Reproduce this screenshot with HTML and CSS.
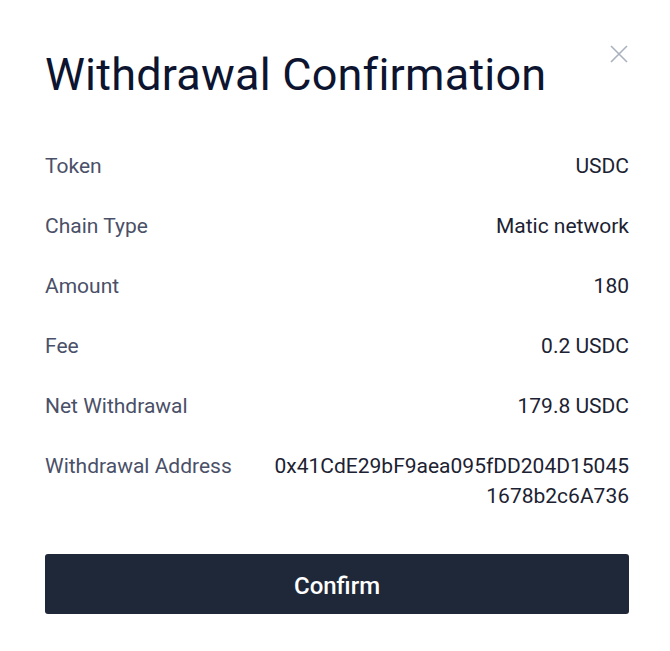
FILE: index.html
```html
<!DOCTYPE html>
<html>
<head>
<meta charset="utf-8">
<link rel="stylesheet" href="styles.css">
</head>
<body>
<div class="modal">
  <button class="close" aria-label="Close">
    <svg width="18" height="18" viewBox="0 0 18 18"><path d="M1 1L17 17M17 1L1 17" stroke="#a9b1bf" stroke-width="1.6" fill="none"/></svg>
  </button>
  <h1 class="title">Withdrawal Confirmation</h1>
  <div class="rows">
    <div class="row"><span class="label">Token</span><span class="value">USDC</span></div>
    <div class="row"><span class="label">Chain Type</span><span class="value">Matic network</span></div>
    <div class="row"><span class="label">Amount</span><span class="value">180</span></div>
    <div class="row"><span class="label">Fee</span><span class="value">0.2 USDC</span></div>
    <div class="row"><span class="label">Net Withdrawal</span><span class="value">179.8 USDC</span></div>
    <div class="row"><span class="label">Withdrawal Address</span><span class="value addr">0x41CdE29bF9aea095fDD204D15045<br>1678b2c6A736</span></div>
  </div>
  <button class="confirm">Confirm</button>
</div>
</body>
</html>
```
FILE: styles.css
```css
* { box-sizing: border-box; }
html, body { margin: 0; padding: 0; background: #ffffff; }
body { font-family: Roboto, "Noto Sans", sans-serif; }
.modal {
  position: relative;
  width: 670px;
  height: 651px;
  padding: 44px 41px 0 45px;
  background: #fff;
}
.close {
  position: absolute;
  top: 45px;
  right: 42px;
  width: 18px;
  height: 18px;
  padding: 0;
  border: 0;
  background: none;
  display: flex;
}
.title {
  margin: 0;
  font-size: 45px;
  font-weight: 400;
  line-height: 62px;
  color: #0c1430;
  letter-spacing: 0.2px;
}
.rows {
  margin-top: 45px;
  display: flex;
  flex-direction: column;
  gap: 30px;
}
.row {
  display: flex;
  justify-content: space-between;
  align-items: flex-start;
  font-size: 21px;
  line-height: 30px;
}
.label { color: #4a5068; }
.value { color: #1c2232; text-align: right; }
.confirm {
  margin-top: 43px;
  width: 100%;
  height: 60px;
  padding: 3px 0 0;
  border: 0;
  border-radius: 3px;
  background: #1f2839;
  color: #ffffff;
  font-family: Roboto, "Noto Sans", sans-serif;
  font-size: 24px;
  font-weight: 500;
  display: flex;
  align-items: center;
  justify-content: center;
}
```
